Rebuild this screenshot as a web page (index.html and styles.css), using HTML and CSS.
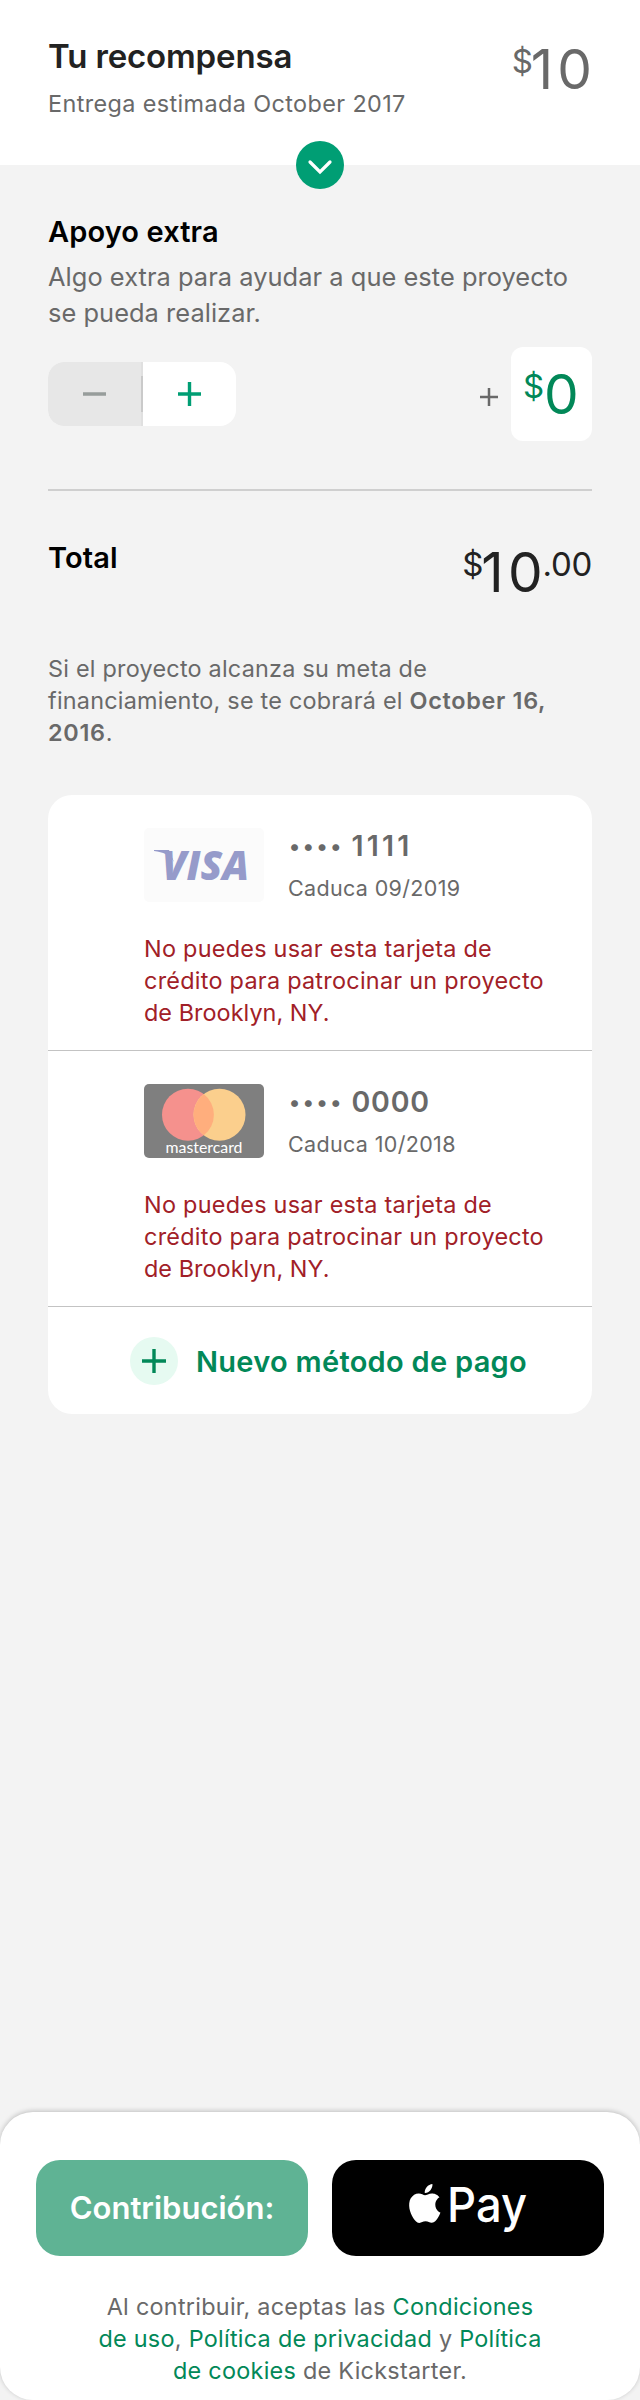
FILE: index.html
```html
<!DOCTYPE html>
<html lang="es">
<head>
<meta charset="utf-8">
<title>Contribución</title>
<link rel="stylesheet" href="styles.css">
</head>
<body>
<main class="screen">
  <header class="reward">
    <div>
      <h1 class="reward-title">Tu recompensa</h1>
      <p class="small reward-date">Entrega estimada October 2017</p>
    </div>
    <div class="amount amount-muted"><span class="amount-small">$</span><span class="amount-big"><span class="kern">1</span>0</span></div>
    <svg class="expand" viewBox="0 0 48 48"><circle cx="24" cy="24" r="24" fill="#009e74"/><path d="M14 21l10 10 10-10" fill="none" stroke="#fff" stroke-width="3.2" stroke-linecap="round"/></svg>
  </header>

  <section class="bonus">
    <h2 class="heading">Apoyo extra</h2>
    <p class="bonus-text">Algo extra para ayudar a que este proyecto<br>se pueda realizar.</p>
    <div class="bonus-row">
      <div class="stepper">
        <div class="step step-off"><svg width="24" height="24" viewBox="0 0 24 24"><path d="M0 12h23" stroke="#979d9b" stroke-width="3.6"/></svg></div>
        <div class="step-divider"></div>
        <div class="step"><svg width="24" height="24" viewBox="0 0 24 24"><path d="M0 12h23M11.5 0v24" stroke="#009e74" stroke-width="3.4"/></svg></div>
      </div>
      <svg class="plus-sign" width="18" height="18" viewBox="0 0 18 18"><path d="M0 9h18M9 0v18" stroke="#696969" stroke-width="2.5"/></svg>
      <div class="bonus-box"><div class="amount amount-green"><span class="amount-small">$</span><span class="amount-big">0</span></div></div>
    </div>
  </section>

  <section class="total">
    <h2 class="heading">Total</h2>
    <div class="amount amount-dark"><span class="amount-small">$</span><span class="amount-big"><span class="kern">1</span>0</span><span class="amount-small cents">.00</span></div>
  </section>

  <p class="small charge">Si el proyecto alcanza su meta de<br>financiamiento, se te cobrará el <b>October 16,</b><br><b>2016</b>.</p>

  <section class="methods">
    <article class="method">
      <div class="method-head">
        <svg class="logo" viewBox="0 0 120 74">
          <rect width="120" height="74" rx="5" fill="#fbfbfb"/>
          <path d="M10 22h15l5 12c-4-7-11-10-20-11z" fill="#969bca"/>
          <text class="visa" x="18" y="51.5" textLength="87" lengthAdjust="spacingAndGlyphs">VISA</text>
        </svg>
        <div>
          <p class="number"><span class="dots">••••</span><span class="ones">1111</span></p>
          <p class="expiry">Caduca 09/2019</p>
        </div>
      </div>
      <p class="small error">No puedes usar esta tarjeta de<br>crédito para patrocinar un proyecto<br><span class="place">de Brooklyn, NY.</span></p>
    </article>
    <article class="method">
      <div class="method-head">
        <svg class="logo" viewBox="0 0 120 74">
          <rect width="120" height="74" rx="5" fill="#7f7f7f"/>
          <circle cx="44" cy="30.7" r="26" fill="#f5918d"/>
          <circle cx="75.5" cy="30.7" r="26" fill="#fbcf8d"/>
          <path d="M59.75 10.1a26 26 0 0 1 0 41.2a26 26 0 0 1 0-41.2z" fill="#ffae7d"/>
          <text class="mastercard" x="21.5" y="69.3" textLength="77" lengthAdjust="spacingAndGlyphs">mastercard</text>
        </svg>
        <div>
          <p class="number"><span class="dots">••••</span><span>0000</span></p>
          <p class="expiry">Caduca 10/2018</p>
        </div>
      </div>
      <p class="small error">No puedes usar esta tarjeta de<br>crédito para patrocinar un proyecto<br><span class="place">de Brooklyn, NY.</span></p>
    </article>
    <div class="add">
      <svg width="48" height="48" viewBox="0 0 48 48"><circle cx="24" cy="24" r="24" fill="#e6faf1"/><path d="M12 24h24M24 12v24" stroke="#028858" stroke-width="3.4"/></svg>
      <span class="add-label">Nuevo método de pago</span>
    </div>
  </section>

  <footer class="checkout">
    <div class="buttons">
      <div class="button pledge">Contribución:</div>
      <div class="button apple-pay">
        <svg width="128" height="80" viewBox="-4 -10 128 80">
          <path transform="translate(-2.4 6) scale(1.6 1.62)" fill="#fff" d="M12.152 6.896c-.948 0-2.415-1.078-3.96-1.04-2.04.027-3.91 1.183-4.961 3.014-2.117 3.675-.546 9.103 1.519 12.09 1.013 1.454 2.208 3.09 3.792 3.039 1.52-.065 2.09-.987 3.935-.987 1.831 0 2.35.987 3.96.948 1.637-.026 2.676-1.48 3.676-2.948 1.156-1.688 1.636-3.325 1.662-3.415-.039-.013-3.182-1.221-3.22-4.857-.026-3.04 2.48-4.494 2.597-4.559-1.429-2.09-3.623-2.324-4.39-2.376-2-.156-3.675 1.09-4.61 1.09zM15.53 3.83c.843-1.012 1.4-2.427 1.245-3.83-1.207.052-2.662.805-3.532 1.818-.78.896-1.454 2.338-1.273 3.714 1.338.104 2.715-.688 3.559-1.701"/>
          <text class="pay" x="39" y="44.3" textLength="80" lengthAdjust="spacingAndGlyphs">Pay</text>
        </svg>
      </div>
    </div>
    <p class="small legal">Al contribuir, aceptas las <a>Condiciones</a><br><a>de uso</a>, <a>Política de privacidad</a> y <a>Política</a><br><a>de cookies</a> de Kickstarter.</p>
  </footer>
</main>
</body>
</html>
```
FILE: styles.css
```css
* { box-sizing: border-box; margin: 0; padding: 0; }
body { background: #f3f3f3; font-family: Inter, "Liberation Sans", sans-serif; color: #696969; }
svg { display: block; flex: none; }
.screen { width: 640px; height: 2400px; display: flex; flex-direction: column; white-space: nowrap; }

.small { font-size: 23.4px; line-height: 32px; letter-spacing: .27px; }
.heading { font-size: 29px; line-height: 38px; font-weight: 600; color: #000; letter-spacing: .12px; }

.amount { display: flex; align-items: flex-start; }
.amount-big { font-size: 55px; line-height: 60px; }
.kern { letter-spacing: 4.2px; }
.amount-small { font-size: 33px; line-height: 45px; width: 19px; }
.amount-muted { color: #696969; }
.amount-green { color: #028858; }
.amount-green .amount-small { width: 21px; }
.amount-dark { color: #222; }
.amount-small.cents { width: auto; letter-spacing: -.3px; }

.reward { position: relative; height: 165px; padding: 36px 48px 0; background: #fff; display: flex; justify-content: space-between; }
.reward-title { font-size: 33px; line-height: 40px; font-weight: 600; color: #222; letter-spacing: -.15px; }
.reward-date { margin-top: 12px; letter-spacing: .39px; }
.reward .amount { margin-top: 3px; }
.expand { position: absolute; left: 296px; bottom: -24px; width: 48px; height: 48px; }

.bonus { margin: 48px 48px 0; padding-bottom: 48px; border-bottom: 2px solid #cfcfcf; }
.bonus-text { margin-top: 8px; font-size: 25.4px; line-height: 36px; letter-spacing: .05px; }
.bonus-row { margin-top: 16px; height: 94px; display: flex; align-items: center; }
.stepper { width: 188px; height: 64px; display: flex; align-items: center; border-radius: 16px; overflow: hidden; background: #fff; }
.step { flex: 1; height: 64px; display: flex; align-items: center; justify-content: center; }
.step-off { background: #e7e7e7; }
.step-divider { width: 2px; height: 64px; background: linear-gradient(#e0e0e0 14px, #cacaca 14px 50px, #e0e0e0 50px); }
.plus-sign { margin: 5px 13px 0 auto; }
.bonus-box { width: 81px; height: 94px; padding: 17px 0 0 12px; border-radius: 12px; background: #fff; }

.total { margin: 48px 48px 0; height: 72px; display: flex; justify-content: space-between; }
.total .amount { margin-top: 3px; }
.charge { margin: 42px 48px 0; letter-spacing: .23px; }
.charge b { font-weight: 600; letter-spacing: .7px; }

.methods { margin: 46px 48px 0; height: 619px; border-radius: 24px; background: #fff; }
.method { height: 256px; padding: 33px 0 0 96px; border-bottom: 1px solid #c3c3c3; }
.method-head { display: flex; gap: 24px; height: 74px; }
.logo { width: 120px; height: 74px; }
.visa { font: italic 800 41px "Open Sans", sans-serif; fill: #969bca; }
.mastercard { font: 400 15px Lato, sans-serif; fill: #fff; }
.number { display: flex; font-size: 28.5px; line-height: 36px; font-weight: 600; letter-spacing: .8px; }
.dots { width: 63.5px; padding-left: 1px; font-size: 22px; letter-spacing: 2.7px; }
.ones { letter-spacing: 3.2px; }
.expiry { margin-top: 10px; font-size: 21.5px; line-height: 28px; letter-spacing: .34px; }
.error { margin-top: 31px; color: #a12027; }
.place { letter-spacing: .05px; }
.add { height: 107px; padding-left: 82px; display: flex; align-items: center; gap: 18px; }
.add-label { font-size: 29px; line-height: 36px; font-weight: 600; color: #028858; letter-spacing: .29px; margin-top: 3px; }

.checkout { margin-top: auto; height: 288px; padding: 48px 36px 0; border-radius: 33px; background: #fff; box-shadow: 0 -1px 5px rgba(0,0,0,.22); }
.buttons { display: flex; gap: 24px; }
.button { flex: 1; height: 96px; border-radius: 24px; display: flex; align-items: center; justify-content: center; }
.pledge { background: #5fb394; color: #fff; font-size: 31px; font-weight: 600; padding-bottom: 2px; }
.apple-pay { background: #000; }
.pay { font: 500 48.5px Inter, sans-serif; fill: #fff; }
.legal { margin-top: 35px; text-align: center; letter-spacing: .27px; }
.legal a { color: #028858; }
```
